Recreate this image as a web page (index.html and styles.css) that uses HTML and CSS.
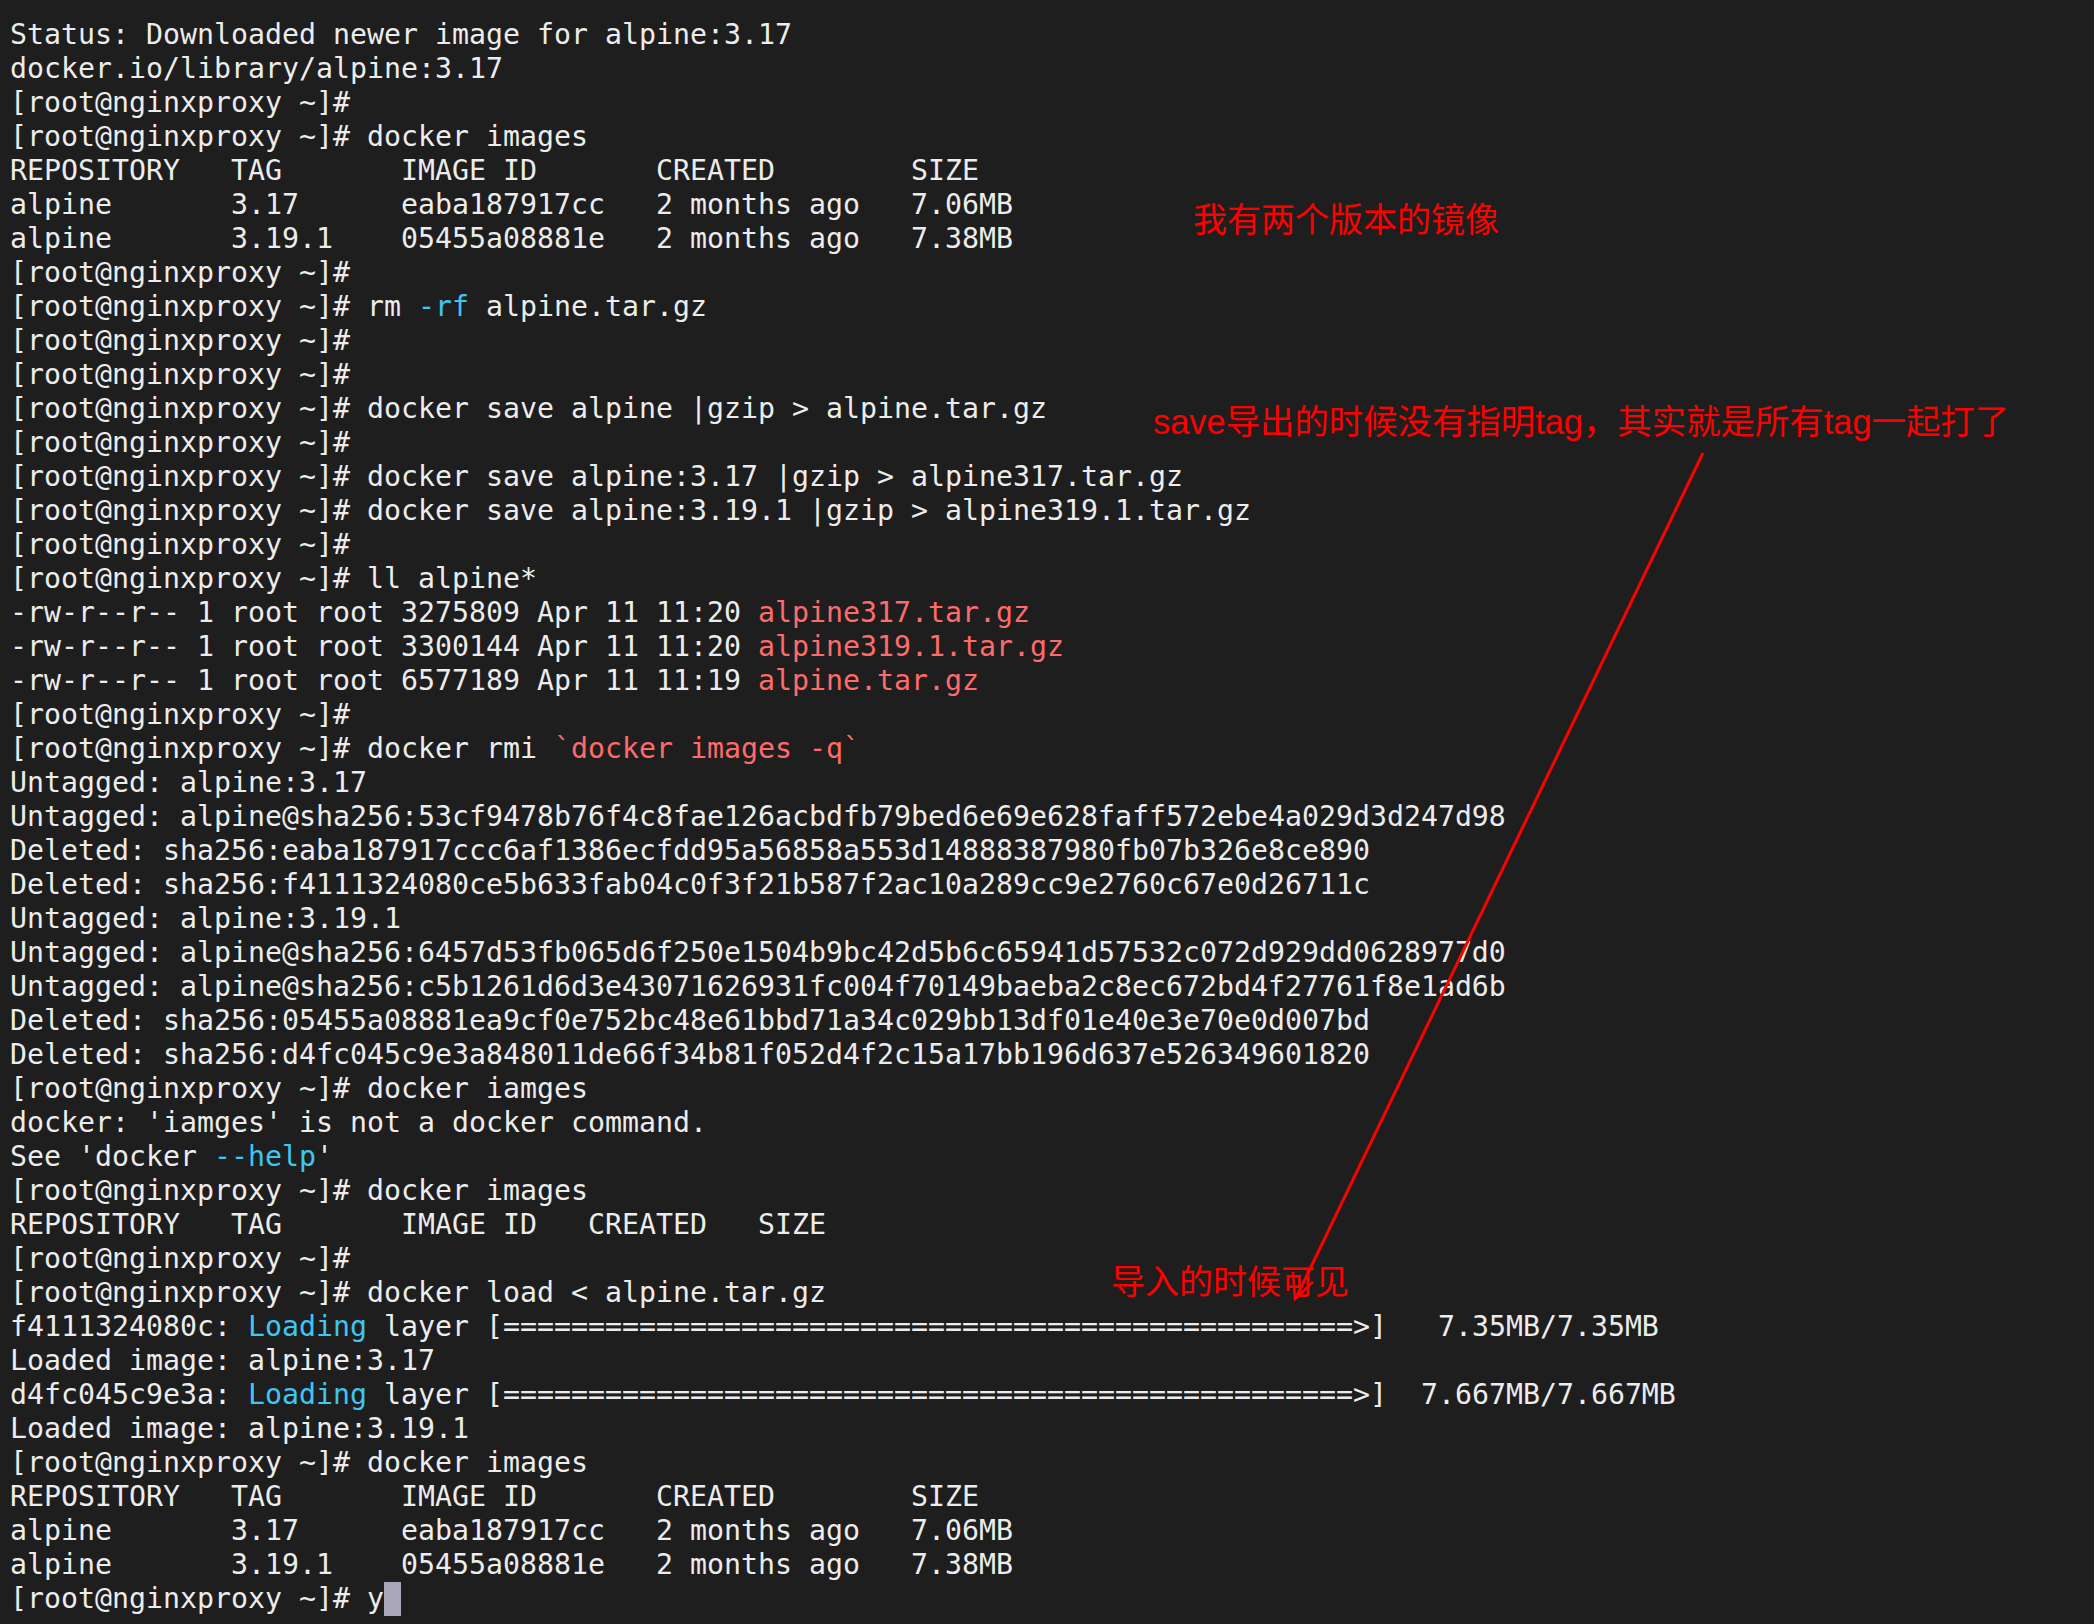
FILE: index.html
```html
<!DOCTYPE html>
<html lang="zh-CN">
<head>
<meta charset="utf-8">
<title>terminal</title>
<link rel="stylesheet" href="styles.css">
</head>
<body>
<main class="term">
<pre class="out">Status: Downloaded newer image for alpine:3.17
docker.io/library/alpine:3.17
[root@nginxproxy ~]#
[root@nginxproxy ~]# docker images
REPOSITORY   TAG       IMAGE ID       CREATED        SIZE
alpine       3.17      eaba187917cc   2 months ago   7.06MB
alpine       3.19.1    05455a08881e   2 months ago   7.38MB
[root@nginxproxy ~]#
[root@nginxproxy ~]# rm <span class="cy">-rf</span> alpine.tar.gz
[root@nginxproxy ~]#
[root@nginxproxy ~]#
[root@nginxproxy ~]# docker save alpine |gzip &gt; alpine.tar.gz
[root@nginxproxy ~]#
[root@nginxproxy ~]# docker save alpine:3.17 |gzip &gt; alpine317.tar.gz
[root@nginxproxy ~]# docker save alpine:3.19.1 |gzip &gt; alpine319.1.tar.gz
[root@nginxproxy ~]#
[root@nginxproxy ~]# ll alpine*
-rw-r--r-- 1 root root 3275809 Apr 11 11:20 <span class="rd">alpine317.tar.gz</span>
-rw-r--r-- 1 root root 3300144 Apr 11 11:20 <span class="rd">alpine319.1.tar.gz</span>
-rw-r--r-- 1 root root 6577189 Apr 11 11:19 <span class="rd">alpine.tar.gz</span>
[root@nginxproxy ~]#
[root@nginxproxy ~]# docker rmi <span class="rd">`docker images -q`</span>
Untagged: alpine:3.17
Untagged: alpine@sha256:53cf9478b76f4c8fae126acbdfb79bed6e69e628faff572ebe4a029d3d247d98
Deleted: sha256:eaba187917ccc6af1386ecfdd95a56858a553d14888387980fb07b326e8ce890
Deleted: sha256:f4111324080ce5b633fab04c0f3f21b587f2ac10a289cc9e2760c67e0d26711c
Untagged: alpine:3.19.1
Untagged: alpine@sha256:6457d53fb065d6f250e1504b9bc42d5b6c65941d57532c072d929dd0628977d0
Untagged: alpine@sha256:c5b1261d6d3e43071626931fc004f70149baeba2c8ec672bd4f27761f8e1ad6b
Deleted: sha256:05455a08881ea9cf0e752bc48e61bbd71a34c029bb13df01e40e3e70e0d007bd
Deleted: sha256:d4fc045c9e3a848011de66f34b81f052d4f2c15a17bb196d637e526349601820
[root@nginxproxy ~]# docker iamges
docker: 'iamges' is not a docker command.
See 'docker <span class="cy">--help</span>'
[root@nginxproxy ~]# docker images
REPOSITORY   TAG       IMAGE ID   CREATED   SIZE
[root@nginxproxy ~]#
[root@nginxproxy ~]# docker load &lt; alpine.tar.gz
f4111324080c: <span class="cy">Loading</span> layer [==================================================&gt;]   7.35MB/7.35MB
Loaded image: alpine:3.17
d4fc045c9e3a: <span class="cy">Loading</span> layer [==================================================&gt;]  7.667MB/7.667MB
Loaded image: alpine:3.19.1
[root@nginxproxy ~]# docker images
REPOSITORY   TAG       IMAGE ID       CREATED        SIZE
alpine       3.17      eaba187917cc   2 months ago   7.06MB
alpine       3.19.1    05455a08881e   2 months ago   7.38MB
[root@nginxproxy ~]# y<span class="cursor"> </span></pre>

<div class="note note-a">我有两个版本的镜像</div>
<div class="note note-b">save导出的时候没有指明tag，其实就是所有tag一起打了</div>
<div class="note note-c">导入的时候可见</div>
<svg class="arrow" width="2094" height="1624" viewBox="0 0 2094 1624">
  <line x1="1703" y1="453" x2="1296" y2="1298" stroke="#ff0000" stroke-width="3"/>
  <polyline points="1293,1272 1295,1299 1313,1282" fill="none" stroke="#ff0000" stroke-width="2.5"/>
</svg>
</main>
</body>
</html>
```

FILE: styles.css
```css
html, body {
  margin: 0;
  padding: 0;
  background: #1e1e1e;
}

.term {
  position: relative;
  width: 2094px;
  height: 1624px;
  overflow: hidden;
  background: #1e1e1e;
}

.out {
  margin: 0;
  padding: 18px 0 0 10px;
  font-family: "DejaVu Sans Mono", "Liberation Mono", monospace;
  font-size: 28.24px;
  line-height: 34px;
  color: #ececec;
  white-space: pre;
}

.cy { color: #3fc6f2; }
.rd { color: #ff6b6b; }

.cursor {
  display: inline-block;
  width: 17px;
  height: 34px;
  vertical-align: top;
  background: #a9a7b8;
}

.note {
  position: absolute;
  color: #ff0000;
  font-family: "Liberation Sans", "Noto Sans CJK SC", sans-serif;
  font-size: 34px;
  line-height: 34px;
  white-space: nowrap;
}

.note-a { left: 1193px; top: 203px; }
.note-b { left: 1153px; top: 405px; font-size: 34.4px; }
.note-c { left: 1111px; top: 1265px; }

.arrow {
  position: absolute;
  left: 0;
  top: 0;
  pointer-events: none;
}
```
